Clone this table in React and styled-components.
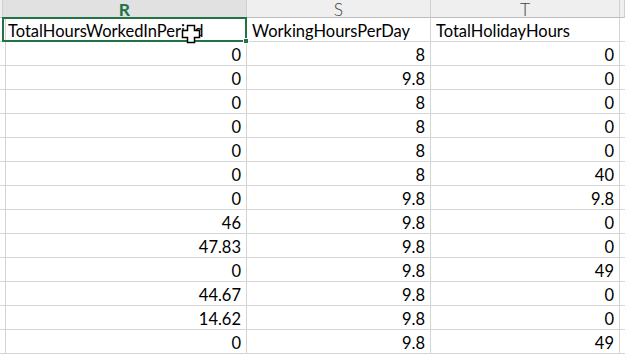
import React from "react";
import styled, { createGlobalStyle } from "styled-components";

const Global = createGlobalStyle`
  html, body { margin: 0; padding: 0; background: #fff; overflow: hidden; }
  * { box-sizing: border-box; }
`;

const Sheet = styled.div`
  display: grid;
  grid-template-columns: 3px 244px 184px 189px 5px;
  grid-auto-rows: 24px;
  grid-template-rows: 18px;
  width: 625px;
  height: 354px;
  overflow: hidden;
  font-family: Lato, "Open Sans", sans-serif;
  font-size: 16.5px;
  color: #000;
  background: #fff;
`;

const ColHead = styled.div`
  display: flex;
  align-items: center;
  justify-content: center;
  background: ${(p) => (p.$active ? "#e1e1e1" : "#efefef")};
  color: ${(p) => (p.$active ? "#217346" : "#444")};
  font-weight: ${(p) => (p.$active ? 700 : 300)};
  font-size: 17.5px;
  border-right: 1px solid #d0d0d0;
  border-bottom: 1px solid ${(p) => (p.$active ? "#217346" : "#bdbdbd")};
  line-height: 1;
  padding-top: 2px;
`;

const Cell = styled.div`
  position: relative;
  display: flex;
  align-items: flex-start;
  justify-content: ${(p) => (p.$num ? "flex-end" : "flex-start")};
  padding: ${(p) => (p.$header ? "6px 0 0 5px" : "6px 5px 0 0")};
  border-right: 1px solid #d4d4d4;
  border-bottom: 1px solid #d4d4d4;
  white-space: nowrap;
  overflow: visible;
  line-height: 14px;
  color: #000;
`;

const Selection = styled.div`
  position: absolute;
  left: -1px;
  top: -1px;
  right: -1px;
  bottom: -1px;
  border: 2px solid #217346;
  pointer-events: none;
  z-index: 2;
`;

const Handle = styled.div`
  position: absolute;
  right: -4px;
  bottom: -4px;
  width: 6px;
  height: 6px;
  background: #217346;
  border: 1px solid #fff;
`;

const Cursor = styled.svg`
  position: absolute;
  left: 178px;
  top: 6px;
  z-index: 3;
`;

const rows = [
  [0, 8, 0],
  [0, 9.8, 0],
  [0, 8, 0],
  [0, 8, 0],
  [0, 8, 0],
  [0, 8, 40],
  [0, 9.8, 9.8],
  [46, 9.8, 0],
  [47.83, 9.8, 0],
  [0, 9.8, 49],
  [44.67, 9.8, 0],
  [14.62, 9.8, 0],
  [0, 9.8, 49],
];

export default function App() {
  return (
    <>
      <Global />
      <Sheet>
        <ColHead />
        <ColHead $active>R</ColHead>
        <ColHead>S</ColHead>
        <ColHead>T</ColHead>
        <ColHead />

        <Cell />
        <Cell $header>
          TotalHoursWorkedInPeriod
          <Selection>
            <Handle />
          </Selection>
          <Cursor width="20" height="20" viewBox="0 0 20 20">
            <path
              d="M6.5 1.5h7v5h5v7h-5v5h-7v-5h-5v-7h5z"
              fill="#fff"
              stroke="#000"
              strokeWidth="1.5"
              strokeLinejoin="miter"
            />
          </Cursor>
        </Cell>
        <Cell $header>WorkingHoursPerDay</Cell>
        <Cell $header>TotalHolidayHours</Cell>
        <Cell />

        {rows.map((r, i) => (
          <React.Fragment key={i}>
            <Cell />
            {r.map((v, j) => (
              <Cell key={j} $num>
                {v}
              </Cell>
            ))}
            <Cell />
          </React.Fragment>
        ))}
      </Sheet>
    </>
  );
}
